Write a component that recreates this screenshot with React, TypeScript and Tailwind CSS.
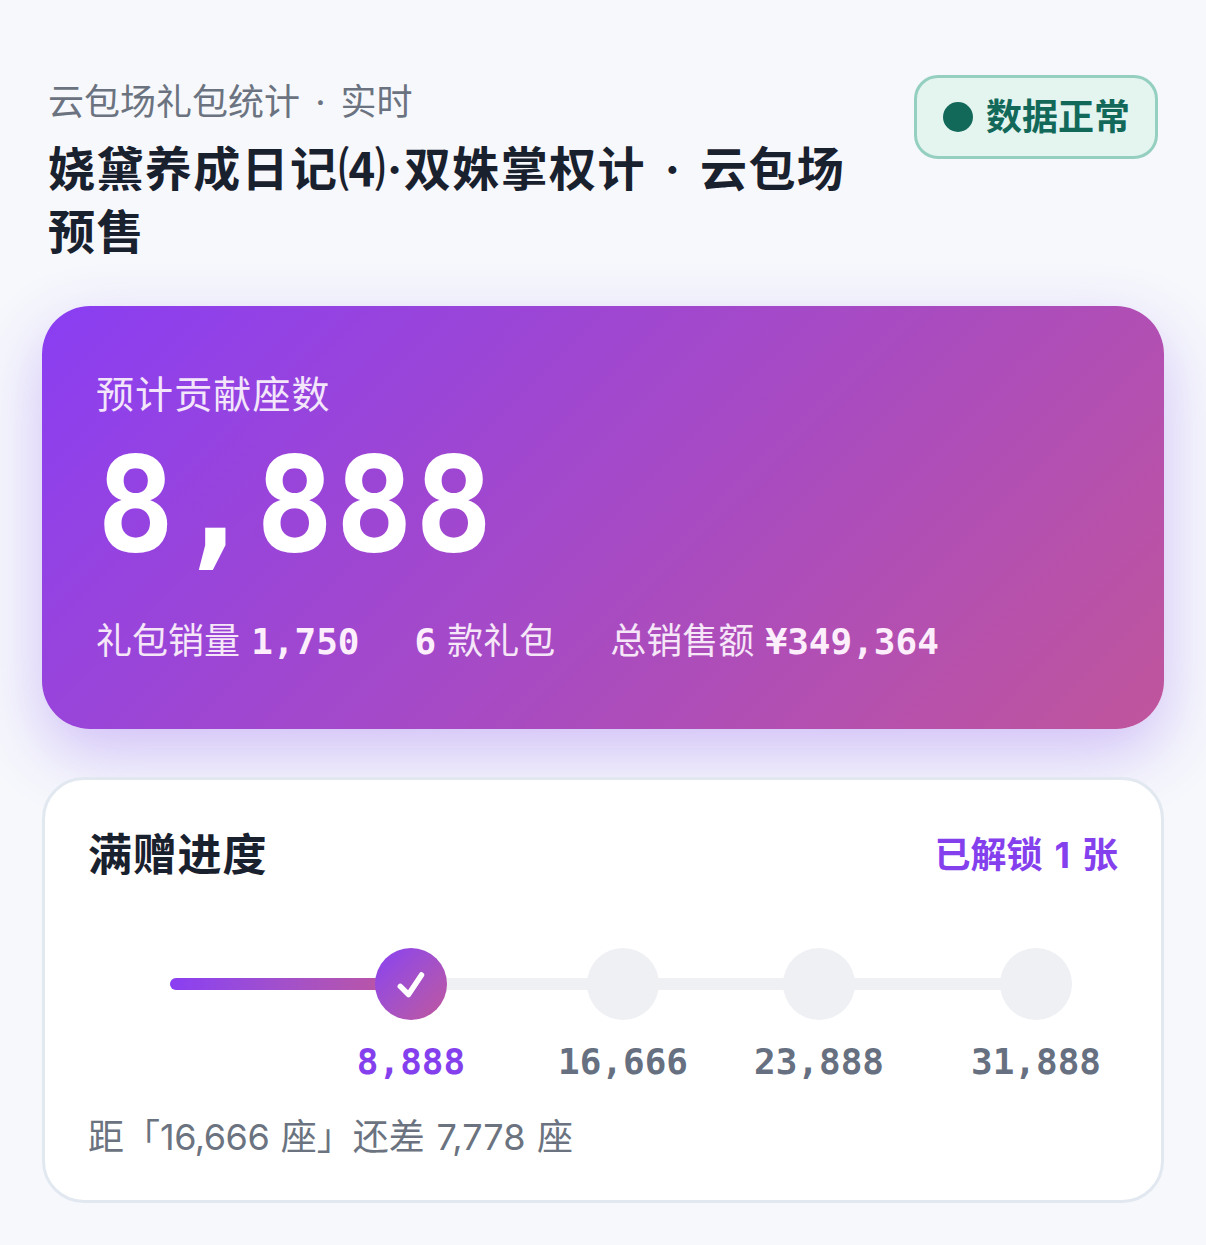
const sans = "font-['Inter','Noto_Sans_CJK_SC',sans-serif]";
const mono = "font-['DejaVu_Sans_Mono','Noto_Sans_CJK_SC',monospace]";

const steps = [
  { value: '8,888', done: true, className: 'ml-[253px]' },
  { value: '16,666', done: false, className: 'ml-[72px]' },
  { value: '23,888', done: false, className: 'ml-[56px]' },
  { value: '31,888', done: false, className: 'ml-[77px]' },
];

function Step({ value, done, className }: { value: string; done: boolean; className: string }) {
  return (
    <div className={`relative flex w-[140px] flex-col items-center ${className}`}>
      <div
        className={`flex h-[72px] w-[72px] items-center justify-center rounded-full ${
          done ? 'bg-gradient-to-br from-[#8a3ef2] to-[#c0559c]' : 'bg-[#eff0f4]'
        }`}
      >
        {done && (
          <svg width="28" height="28" viewBox="0 0 28 28" fill="none">
            <path d="M3.3 16.4l8.2 8.1L24.5 5" stroke="white" strokeWidth="5.5" strokeLinecap="round" strokeLinejoin="round" />
          </svg>
        )}
      </div>
      <div className={`${mono} mt-[20px] text-[36px] font-bold leading-[44px] ${done ? 'text-[#8540ee]' : 'text-[#667080]'}`}>
        {value}
      </div>
    </div>
  );
}

export default function App() {
  return (
    <div className={`${sans} h-[1245px] overflow-hidden bg-[#f6f8fc] px-[42px] pt-[75px]`}>
      {/* Header */}
      <div className="flex items-start justify-between pl-[6px] pr-[6px]">
        <div className="w-[820px]">
          <div className="text-[36px] leading-[54px] text-[#6b7380] [word-spacing:5px]">云包场礼包统计 · 实时</div>
          <div className="mt-[8px] text-[47px] font-bold leading-[63px] tracking-[1.4px] text-[#1a212e] [word-spacing:6px]">
            娆黛养成日记⑷·双姝掌权计 · 云包场预售
          </div>
        </div>
        <div className="flex h-[84px] w-[244px] items-center gap-[13px] rounded-[24px] border-[3px] border-[#95cfc0] bg-[#e4f5f0] pl-[26px]">
          <span className="h-[30px] w-[30px] rounded-full bg-[#12695a]" />
          <span className="text-[36px] font-bold text-[#12695a]">数据正常</span>
        </div>
      </div>

      {/* Hero */}
      <div className="mt-[43px] h-[423px] rounded-[48px] bg-[linear-gradient(135deg,#8a3ef2,#c0559c)] pl-[54px] pt-[60px] text-white shadow-[0_24px_64px_rgba(124,58,237,0.3)]">
        <div className="text-[38px] leading-[56px] tracking-[1.1px] text-[#f3e6fb]">预计贡献座数</div>
        <div className={`${mono} mt-[8px] text-[132px] font-bold leading-[150px]`}>8,888</div>
        <div className="mt-[37px] flex gap-[55px] text-[36px] leading-[48px] text-[#f5e6f8] [word-spacing:1px]">
          <span>
            礼包销量 <b className={`${mono} text-[#fdeefc]`}>1,750</b>
          </span>
          <span>
            <b className={`${mono} text-[#fdeefc]`}>6</b> 款礼包
          </span>
          <span>
            总销售额 <b className={`${mono} text-[#fdeefc]`}>¥349,364</b>
          </span>
        </div>
      </div>

      {/* Progress card */}
      <div className="mt-[48px] h-[426px] rounded-[42px] border-[3px] border-[#e2e8f0] bg-white px-[43px] pt-[43px]">
        <div className="flex items-center justify-between">
          <div className="text-[44px] font-bold leading-[64px] tracking-[0.8px] text-[#1a212e]">满赠进度</div>
          <div className="text-[36px] font-bold text-[#8540ee] [word-spacing:3.5px]">已解锁 1 张</div>
        </div>
        <div className="relative mt-[61px] flex">
          {/* track */}
          <div className="absolute left-[82px] top-[30px] h-[12px] w-[866px] rounded-full bg-[#eff0f4]" />
          <div className="absolute left-[82px] top-[30px] h-[12px] w-[241px] rounded-full bg-gradient-to-r from-[#8a3ef2] to-[#c0559c]" />
          {steps.map((s) => (
            <Step key={s.value} {...s} />
          ))}
        </div>
        <div className="mt-[27px] text-[36px] leading-[52px] text-[#6b7380] [word-spacing:1.5px]">
          距「<span className="tracking-[-0.5px]">16,666</span> 座」还差 7,778 座
        </div>
      </div>
    </div>
  );
}
